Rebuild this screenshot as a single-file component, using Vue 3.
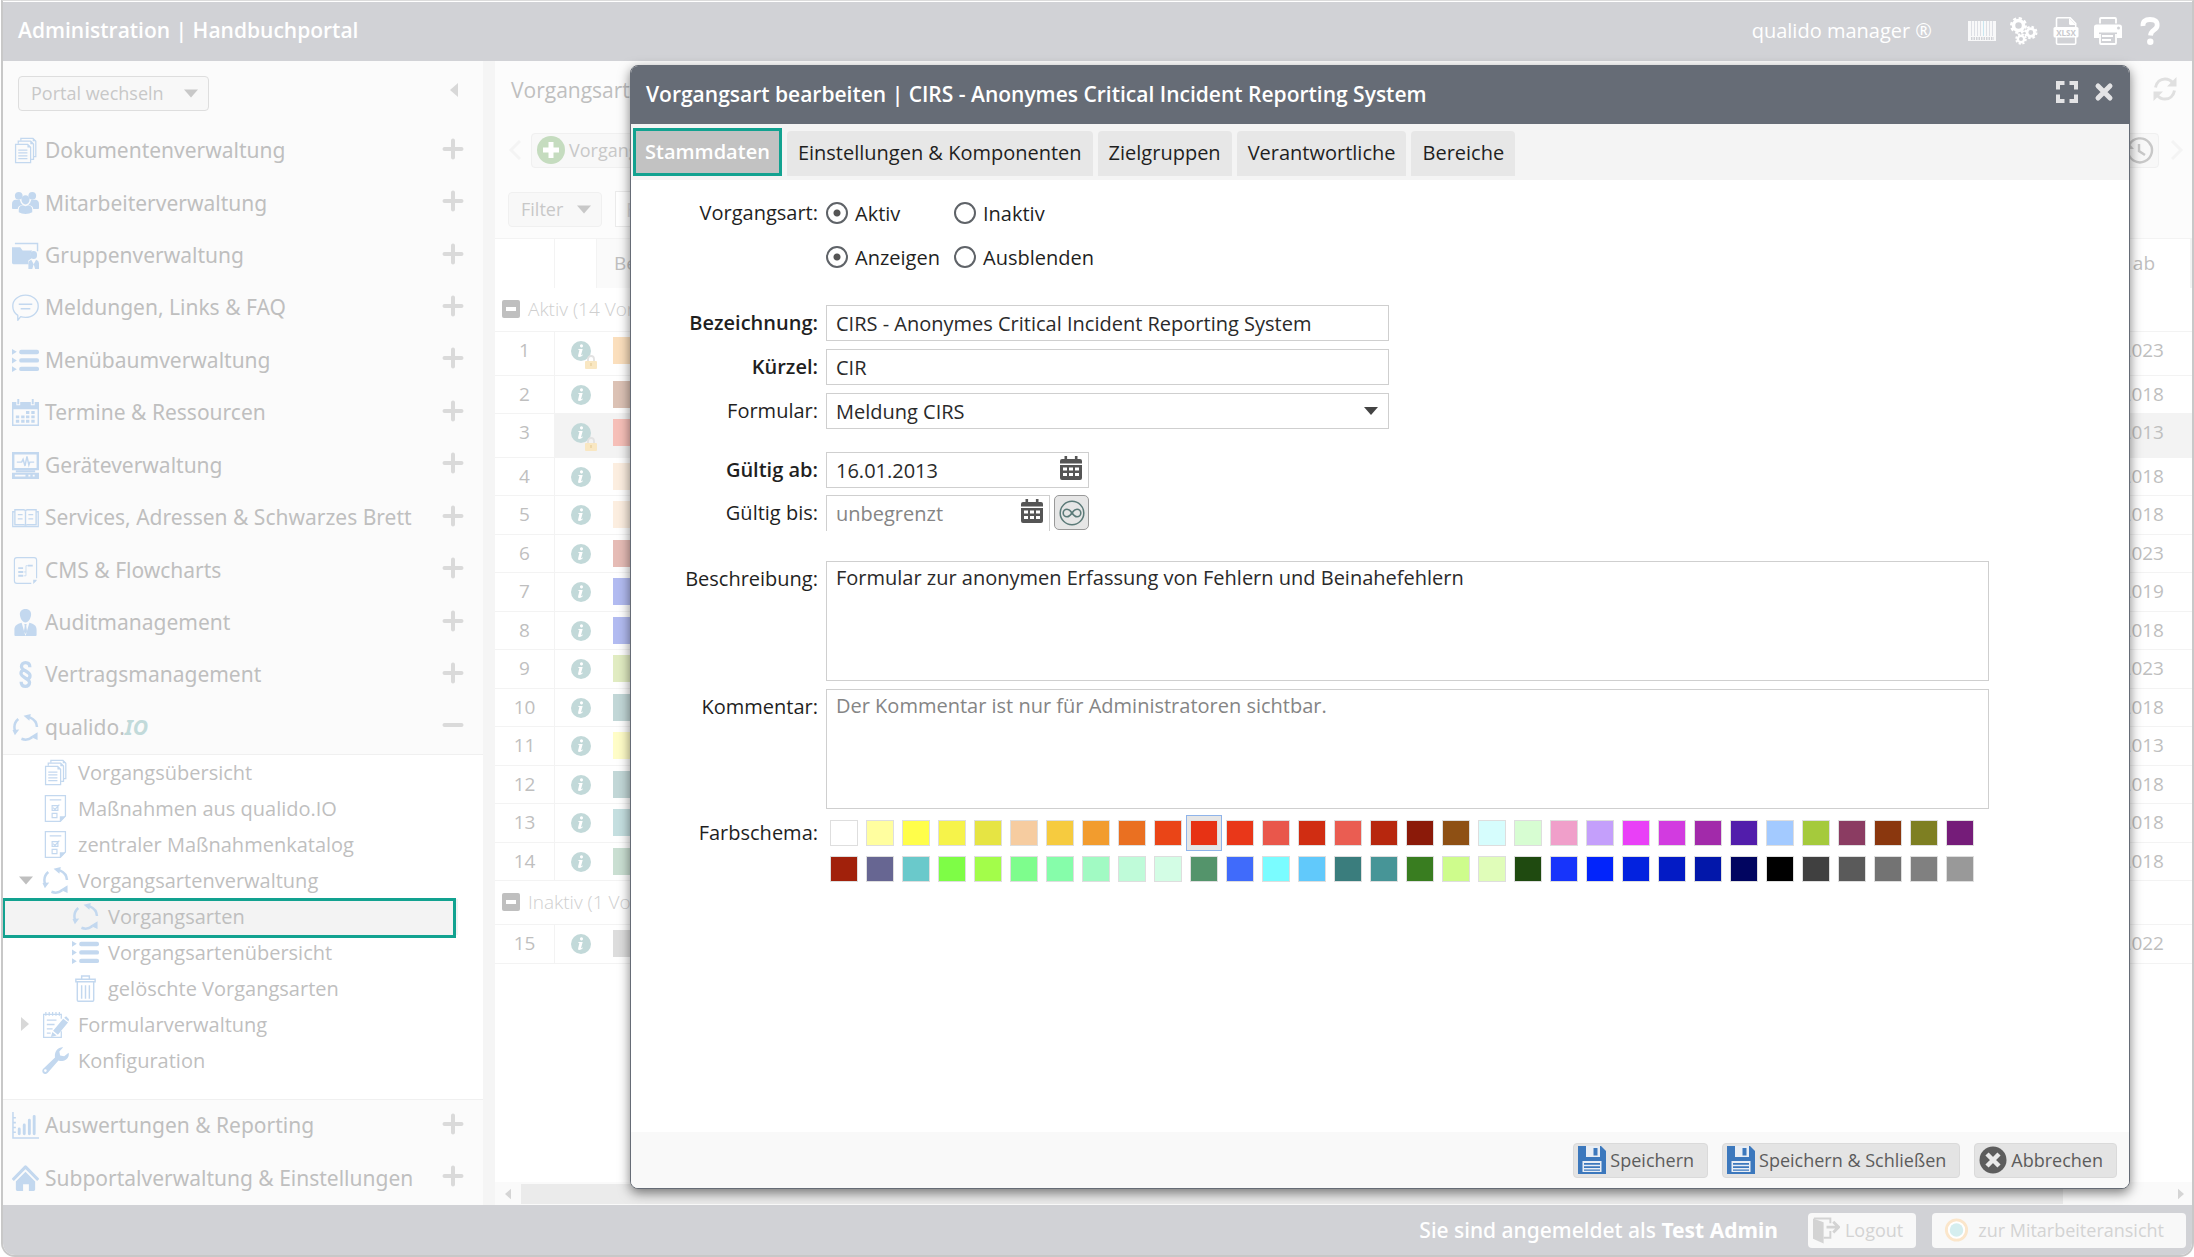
<script setup>
import { ref } from 'vue'

const menuTop = [
  { icon: 'docs', label: 'Dokumentenverwaltung' },
  { icon: 'people', label: 'Mitarbeiterverwaltung' },
  { icon: 'group', label: 'Gruppenverwaltung' },
  { icon: 'speech', label: 'Meldungen, Links & FAQ' },
  { icon: 'list', label: 'Menübaumverwaltung' },
  { icon: 'calendar', label: 'Termine & Ressourcen' },
  { icon: 'device', label: 'Geräteverwaltung' },
  { icon: 'book', label: 'Services, Adressen & Schwarzes Brett' },
  { icon: 'flow', label: 'CMS & Flowcharts' },
  { icon: 'person', label: 'Auditmanagement' },
  { icon: 'law', label: 'Vertragsmanagement' }
]
const menuBottom = [
  { icon: 'chart', label: 'Auswertungen & Reporting' },
  { icon: 'house', label: 'Subportalverwaltung & Einstellungen' }
]
const tree = [
  { icon: 'docs', label: 'Vorgangsübersicht', level: 1 },
  { icon: 'sheet', label: 'Maßnahmen aus qualido.IO', level: 1 },
  { icon: 'sheet', label: 'zentraler Maßnahmenkatalog', level: 1 },
  { icon: 'cycle', label: 'Vorgangsartenverwaltung', level: 1, caret: 'open' },
  { icon: 'cycle', label: 'Vorgangsarten', level: 2, current: true },
  { icon: 'list', label: 'Vorgangsartenübersicht', level: 2 },
  { icon: 'trash', label: 'gelöschte Vorgangsarten', level: 2 },
  { icon: 'note', label: 'Formularverwaltung', level: 1, caret: 'closed' },
  { icon: 'wrench', label: 'Konfiguration', level: 1 }
]
const groups = [
  {
    title: 'Aktiv (14 Vorgangsarten)',
    rows: [
      { nr: 1, color: '#fbdfbd', date: '01.01.2023', locked: true },
      { nr: 2, color: '#dcc2b5', date: '01.01.2018' },
      { nr: 3, color: '#f6bfb8', date: '16.01.2013', locked: true, active: true },
      { nr: 4, color: '#fceee0', date: '01.01.2018' },
      { nr: 5, color: '#fceee0', date: '01.01.2018' },
      { nr: 6, color: '#e6bcb6', date: '01.01.2023' },
      { nr: 7, color: '#b2bbf1', date: '01.01.2019' },
      { nr: 8, color: '#b2bbf1', date: '01.01.2018' },
      { nr: 9, color: '#e1ecc2', date: '01.01.2023' },
      { nr: 10, color: '#c2d7d7', date: '01.01.2018' },
      { nr: 11, color: '#fffdc8', date: '01.01.2013' },
      { nr: 12, color: '#c2d7d7', date: '01.01.2018' },
      { nr: 13, color: '#c5dfe0', date: '01.01.2018' },
      { nr: 14, color: '#cadfd2', date: '01.01.2018' }
    ]
  },
  {
    title: 'Inaktiv (1 Vorgangsart)',
    rows: [{ nr: 15, color: '#dddddd', date: '01.01.2022' }]
  }
]
const tabs = ['Stammdaten', 'Einstellungen & Komponenten', 'Zielgruppen', 'Verantwortliche', 'Bereiche']
const colors = [
  '#ffffff', '#fffe9f', '#fffe4a', '#f6f34a', '#e6e443', '#f6cca0', '#f6cb3f', '#f29c2e',
  '#ea7021', '#ea4517', '#e73214', '#e93719', '#e9574b', '#d02d12', '#ea5d52', '#b7270e',
  '#8b1a09', '#8e5014', '#d6fdfd', '#d7fdd2', '#f09fca', '#c49ffb', '#e940f7', '#d23be0',
  '#a22aaa', '#521dab', '#a3caff', '#a5ca3c', '#8b3c62', '#8a370e', '#7e7f22', '#751c79',
  '#a1210b', '#676692', '#6ac9cb', '#7efd46', '#a3fd4a', '#7efd8d', '#86fdaa', '#a1fac3',
  '#bffbd9', '#d3fde5', '#54946b', '#406bfb', '#7afcff', '#61c9fb', '#3a7d7d', '#479597',
  '#397d20', '#cefc8c', '#e0fdb9', '#1f4a10', '#1734fb', '#0224fb', '#0322df', '#031bc5',
  '#0217aa', '#010560', '#000000', '#404040', '#5a5a5a', '#737373', '#808080', '#999999'
]

const tab = ref(0)
const status = ref('aktiv')
const visibility = ref('anzeigen')
const name = ref('CIRS - Anonymes Critical Incident Reporting System')
const short = ref('CIR')
const validFrom = ref('16.01.2013')
const validTo = ref('')
const description = ref('Formular zur anonymen Erfassung von Fehlern und Beinahefehlern')
const comment = ref('')
const color = ref('#e73214')
</script>

<template>
  <svg class="defs" aria-hidden="true">
    <symbol id="docs" viewBox="0 0 28 28">
      <g fill="none" stroke="currentColor" stroke-width="1.3">
        <path d="M3.700 7.700h12.600l3 3v16H3.700z" /><path d="M6.500 7V4.200h12.800l3 3v16h-2.500" /><path d="M9.200 3.800V1.300h12.500l3 3v16h-2.200" />
        <path d="M6.500 13.500h9.500M6.500 16.500h9.500M6.500 19.500h9.500M6.500 22.500h9.500" />
      </g>
      <path fill="currentColor" d="M16 7.500l3.500 3.500H16zM19 4l3.500 3.500H19zM21.500 1l3.500 3.500h-3.500z" />
    </symbol>
    <symbol id="people" viewBox="0 0 28 28">
      <g fill="currentColor">
        <circle cx="7" cy="6" r="4" /><circle cx="21" cy="6" r="4" />
        <path d="M0 19v-4.500q0-4 4-4.300h4q1 4 3 5-5 1-5 4.500H1Q0 19.700 0 19zM28 19v-4.500q0-4-4-4.300h-4q-1 4-3 5 5 1 5 4.500h5q1 0 1-.7z" />
        <ellipse cx="14" cy="10.200" rx="4.200" ry="4.800" />
        <path d="M7 23v-2.500q0-4 4-4.700l3 1 3-1q4 .7 4 4.700V23q-3 1.800-7 1.800T7 23z" />
      </g>
    </symbol>
    <symbol id="group" viewBox="0 0 28 28">
      <path d="M3 1.500h23.500v8" fill="none" stroke="currentColor" stroke-width="1.500" />
      <path fill="currentColor" d="M0 5.500h8.500l2.500 3.300h10q-2 2-1.500 5l1 3-3.500 2.500V23H1.500Q0 23 0 21.500z" />
      <ellipse cx="22.500" cy="13.500" rx="3.500" ry="4.200" fill="currentColor" />
      <path fill="currentColor" d="M17 28v-6q0-2.500 3-3.500l2.500 4.500 2.500-4.500q3 1 3 3.500v6h-4l-1.500-5-1.500 5z" />
    </symbol>
    <symbol id="speech" viewBox="0 0 28 28">
      <path fill="none" stroke="currentColor" stroke-width="1.400" stroke-linejoin="round" d="M14 1.200c7.300 0 13.200 5 13.200 11.500S21.300 24.200 14 24.200c-1.800 0-3.400-.2-5-.8L6 27.200v-5C2.800 20 .8 16.600.8 12.700.8 6.200 6.700 1.200 14 1.200z" />
      <path stroke="currentColor" stroke-width="1.500" d="M7 10.700h14M9 15.300h10" />
    </symbol>
    <symbol id="list" viewBox="0 0 28 28">
      <g fill="currentColor">
        <path d="M0 2l5 3-5 3zM0 11l5 3-5 3zM0 20l5 3-5 3z" />
        <rect x="7.500" y="2.800" width="20.500" height="4.600" rx="2" /><rect x="7.500" y="11.600" width="20.500" height="4.600" rx="2" /><rect x="7.500" y="20.400" width="20.500" height="4.600" rx="2" />
      </g>
    </symbol>
    <symbol id="calendar" viewBox="0 0 28 28">
      <path fill="currentColor" fill-rule="evenodd" d="M0 3h4.500v3.500h4V3h11v3.500h4V3H28v25H0zM1.500 10.500v16h25v-16z" />
      <path fill="currentColor" d="M5.500 0h2v5.500h-2zM20.500 0h2v5.500h-2zM14.500 12.500h3.500v3h-3.500zM20 12.500h3.500v3H20zM4 17h3.500v3H4zM9.500 17H13v3H9.500zM14.500 17h3.500v3h-3.500zM20 17h3.500v3H20zM4 21.500h3.500v3H4zM9.500 21.500H13v3H9.500zM14.500 21.500h3.500v3h-3.500zM20 21.500h3.500v3H20z" />
    </symbol>
    <symbol id="device" viewBox="0 0 28 28">
      <path fill="currentColor" fill-rule="evenodd" d="M0 0h28v19H0zM2.500 2.500v14h23v-14z" />
      <path fill="none" stroke="currentColor" stroke-width="1.500" d="M5 10.500h5l1.500-3 2 7 2-10 2 9 1-3H23" />
      <path fill="currentColor" fill-rule="evenodd" d="M4 19h20v2H4zM0 21.500h28V28H0zM3 23.500v2h11v-2zM17 23.500v2h2v-2zM21.500 23.500v2h2v-2z" />
    </symbol>
    <symbol id="book" viewBox="0 0 28 28">
      <g fill="none" stroke="currentColor" stroke-width="1.400">
        <path d="M3 6h9q2 0 2 2 0-2 2-2h9v15.500h-9q-2 0-2 1 0-1-2-1H3z" /><path d="M3 8H.8v15.500h26.400V8H25M14 8v14M6 11h5M6 15.500h5M17 11h5M17 15.500h5" />
      </g>
    </symbol>
    <symbol id="flow" viewBox="0 0 28 28">
      <path fill="none" stroke="currentColor" stroke-width="1.200" d="M20 27.400H5q-2.500 0-2.500-2.500V3Q2.500.6 5 .6h18q2.500 0 2.500 2.400v19" />
      <path fill="currentColor" d="M25.500 23.500v1l-3.500 3.500v-4.500zM6.500 10.500h5v2h-5zM6.500 14.500h5v2h-5zM6.500 18.500h5v2h-5zM16.500 8h5v1.800h-5z" />
      <path fill="none" stroke="currentColor" stroke-width=".8" d="M12 19.500h2.500V9h2M12 15.500h2.500" />
    </symbol>
    <symbol id="person" viewBox="0 0 28 28">
      <path fill="currentColor" d="M14 0c4 0 6 2.500 5.800 6-.3 4-2.800 8-5.800 8S8.500 10 8.200 6C8 2.500 10 0 14 0zM2.500 27v-5.500c0-4 2.500-6 7.500-7.200l3.200 11L14 28H3.500q-1 0-1-1zM25.500 27v-5.500c0-4-2.500-6-7.500-7.200l-3.200 11L14 28h10.500q1 0 1-1zM12.800 15.500h2.400l-.4 2 .8 5.500-1.600 3-1.600-3 .8-5.500z" />
    </symbol>
    <symbol id="law" viewBox="0 0 28 28">
      <path fill="none" stroke="currentColor" stroke-width="3.400" d="M18.500 6.500C18.500 3 16.500 1.700 14 1.700S9.800 3.500 9.800 5.600c0 4.600 8.900 5 8.900 9.600 0 2-1.500 3.300-3.500 3.600M9.500 21.500c0 3.500 2 4.800 4.500 4.800s4.200-1.800 4.200-3.900c0-4.600-8.900-5-8.900-9.600 0-2 1.500-3.300 3.500-3.600" />
    </symbol>
    <symbol id="cycle" viewBox="0 0 28 28">
      <g fill="none" stroke="currentColor" stroke-width="2.600">
        <path d="M18.500 3.500c4 1.700 7.200 5.500 7.400 10" /><path d="M21 24.200c-3 2.200-7.500 3-11.200 1.500" /><path d="M3 17C1.800 12.500 3 8.200 6.500 5.200" />
      </g>
      <path fill="currentColor" d="M12 1.800l7.500-1.800-1.500 7zM26.500 19v8l-7.500-3.500zM.5 16.500l7-.5-4.500 6z" />
    </symbol>
    <symbol id="sheet" viewBox="0 0 28 28">
      <path fill="none" stroke="currentColor" stroke-width="1.300" d="M3.500.7h20.800v21l-5.300 5.600H3.500z" />
      <path fill="currentColor" d="M18.500 22h6l-6 6z" />
      <path fill="none" stroke="currentColor" stroke-width="1.200" d="M8 5h12M10.500 11h6v5h-6zM11.500 13l2 2 4.500-5M10.500 19h5v4.500h-5z" />
    </symbol>
    <symbol id="trash" viewBox="0 0 28 28">
      <path fill="none" stroke="currentColor" stroke-width="1.500" d="M10 3.500V1h8v2.500M4 4.500h20v2.500H4zM5.500 7v19q0 1.300 1.300 1.300h14.400q1.300 0 1.300-1.300V7M10 10.500v14M14 10.500v14M18 10.500v14" />
    </symbol>
    <symbol id="note" viewBox="0 0 28 28">
      <path fill="none" stroke="currentColor" stroke-width="1.300" d="M20 21v6.300H1.700V3.500H20V8M4 1v4M7.500 1v4M11 1v4M14.500 1v4M18 1v4M5 9.500h10M5 14h8M5 18.500h6M5 23h4" />
      <path fill="currentColor" d="M22 8l5 4-10.500 12.500-5-4zM23 7l2-1.500L28 8.500 27.500 11zM10.800 21.800l4.400 3.500-6 1.700z" />
    </symbol>
    <symbol id="wrench" viewBox="0 0 28 28">
      <path fill="currentColor" fill-rule="evenodd" d="M22 .2l-4 4.500.8 4 4.200 1L27.600 6c1 4-1.800 8.200-6.600 8.600-1.500.1-2.800-.1-3.900-.6L6 26.800c-1.500 1.700-3.500 1.500-4.700.3s-1.500-3 0-4.500L13.500 11C12.500 5 16.500-.4 22 .2zM3.500 23a1.400 1.400 0 100 2.800 1.400 1.400 0 000-2.800z" />
    </symbol>
    <symbol id="chart" viewBox="0 0 28 28">
      <path fill="none" stroke="currentColor" stroke-width="1.600" d="M1 0v27h27M1 6h3M1 11h3M1 16h3M1 21h3" />
      <path stroke="currentColor" stroke-width="3" stroke-linecap="round" d="M7.500 17.500v5M12.700 13.500v9M18 8.500v14M23 4.500v18" />
    </symbol>
    <symbol id="house" viewBox="0 0 28 28">
      <path fill="none" stroke="currentColor" stroke-width="3.200" stroke-linejoin="round" d="M.8 15.500L14 2l13.200 13.500" />
      <path fill="currentColor" d="M14 7l10 10v8.500q0 1.500-1.500 1.500H17.500v-7h-6v7h-6Q4 27 4 25.500V17z" />
    </symbol>
    <symbol id="info" viewBox="0 0 20 20">
      <circle cx="10" cy="10" r="10" fill="currentColor" />
      <path fill="#fff" d="M9.700 3.600a1.500 1.500 0 102.300 1.300 1.500 1.500 0 00-2.300-1.300zM7.500 8h4.200l-1.700 6.300q.7 0 1.700-.8l.3.500q-1.800 2-3.700 2-1.600 0-1.200-1.600l1.300-5.300H7.300z" />
    </symbol>
    <symbol id="lock" viewBox="0 0 12 14">
      <path d="M3 7V4a3 3 0 016 0v3" fill="none" stroke="#e2e2e2" stroke-width="1.800" />
      <rect y="6" width="12" height="8" rx="1" fill="#f9e7c2" /><rect x="5" y="8" width="2" height="3" fill="#edd7a8" />
    </symbol>
    <symbol id="plus" viewBox="0 0 22 22">
      <path stroke="currentColor" stroke-width="4" stroke-linecap="round" d="M11 2.500v17M2.500 11h17" />
    </symbol>
    <symbol id="minus" viewBox="0 0 22 22">
      <path stroke="currentColor" stroke-width="4" stroke-linecap="round" d="M2.500 11h17" />
    </symbol>
    <symbol id="down" viewBox="0 0 14 8"><path fill="currentColor" d="M0 0h14L7 8z" /></symbol>
    <symbol id="left" viewBox="0 0 8 14"><path fill="currentColor" d="M8 0v14L0 7z" /></symbol>
    <symbol id="right" viewBox="0 0 8 14"><path fill="currentColor" d="M0 0v14l8-7z" /></symbol>
    <symbol id="date" viewBox="0 0 22 24">
      <path fill="currentColor" fill-rule="evenodd" d="M0 5q0-2 2-2h2.500V0h2.600v3h7.800V0h2.600v3H20q2 0 2 2v2.500H0zM0 9h22v13q0 2-2 2H2q-2 0-2-2zM3 11.500v3h4v-3zM9 11.500v3h4v-3zM15 11.500v3h4v-3zM3 17v3h4v-3zM9 17v3h4v-3zM15 17v3h4v-3z" />
    </symbol>
    <symbol id="save" viewBox="0 0 28 28">
      <path fill="#3c78bd" d="M0 0h23l5 5v23H0z" />
      <path fill="#e9eef5" d="M8 0h14v11H8zM4.500 15h19v11h-19z" />
      <path fill="#3c78bd" d="M15.500 2h4v7.500h-4zM6 17h16v1.700H6zM6 20.300h16V22H6zM6 23.500h16v1.300H6z" />
    </symbol>
  </svg>

  <div class="page">
    <header class="topbar">
      <h1>Administration | Handbuchportal</h1>
      <span class="brand">qualido manager ®</span>
      <nav class="tools" aria-label="Werkzeuge">
        <button type="button" aria-label="Barcode">
          <svg viewBox="0 0 28 28"><path fill="#fff" fill-opacity=".85" d="M0 4h28v20H0z" /><path stroke="#dddfe5" stroke-width="1" d="M3.500 4v15M6.500 4v15M9.500 4v15M12.500 4v15M18.500 4v15M21.500 4v15M24.500 4v15" /><path stroke="#c9e6f0" d="M15.500 4v15" /><path stroke="#d1d2d6" stroke-width="3" stroke-dasharray="1.500 1" d="M3 21.500h23" /></svg>
        </button>
        <button type="button" aria-label="Einstellungen">
          <svg viewBox="0 0 28 28" fill="none" stroke="#fff">
            <circle cx="8.500" cy="8.500" r="5" stroke-width="3.500" /><circle cx="8.500" cy="8.500" r="7.300" stroke-width="2.400" stroke-dasharray="3.200 2.530" />
            <circle cx="20.800" cy="15.500" r="3.800" stroke-width="2.800" /><circle cx="20.800" cy="15.500" r="5.700" stroke-width="2" stroke-dasharray="2.500 1.980" />
            <circle cx="11" cy="22" r="3.200" stroke-width="2.400" /><circle cx="11" cy="22" r="4.900" stroke-width="1.800" stroke-dasharray="2.200 1.650" />
          </svg>
        </button>
        <button type="button" aria-label="Excel-Export">
          <svg viewBox="0 0 28 28"><path fill="none" stroke="#fff" stroke-width="1.600" d="M4.500 10V2q0-1.200 1.200-1.200h12.500l5.500 5.700V10M4.500 20v6q0 1.200 1.200 1.200h16.800q1.200 0 1.200-1.200v-6" /><path fill="#fff" d="M17 1l7 7h-5.500Q17 8 17 6.500z" /><rect x="1.500" y="10" width="25" height="10.500" rx="1.500" fill="#fff" /><text x="14" y="18.500" text-anchor="middle" class="xlsx">XLSX</text></svg>
        </button>
        <button type="button" aria-label="Drucken">
          <svg viewBox="0 0 28 28"><path fill="none" stroke="#fff" stroke-width="1.800" d="M6 6.500V2q0-1 1-1h14q1 0 1 1v4.500" /><path fill="#fff" d="M2.500 7.500h23Q28 7.500 28 10v11h-5v-5.500H5V21H0V10q0-2.500 2.500-2.500z" /><circle cx="24.500" cy="11" r="1.500" fill="#d1d2d6" /><path fill="none" stroke="#fff" stroke-width="1.800" d="M6 17v9q0 1 1 1h14q1 0 1-1v-9M8 19h11M8 23h9" /></svg>
        </button>
        <button type="button" aria-label="Hilfe">
          <svg viewBox="0 0 28 28"><path fill="none" stroke="#fff" stroke-width="4.800" d="M7 9Q6.500 2.500 14 2.500t7.200 5.800Q21.200 11 18 13t-3.500 5.500" /><circle cx="14.300" cy="24.800" r="3.200" fill="#fff" /></svg>
        </button>
      </nav>
    </header>

    <div class="body">
      <aside class="sidebar">
        <div class="side-head">
          <button type="button" class="soft-btn portal">Portal wechseln <svg class="caret"><use href="#down" /></svg></button>
          <button type="button" class="collapse" aria-label="Einklappen"><svg><use href="#left" /></svg></button>
        </div>
        <button v-for="m in menuTop" :key="m.label" type="button" class="menu-item">
          <svg class="icon"><use :href="'#' + m.icon" /></svg>
          <span>{{ m.label }}</span>
          <svg class="toggle"><use href="#plus" /></svg>
        </button>
        <button type="button" class="menu-item" aria-expanded="true">
          <svg class="icon"><use href="#cycle" /></svg>
          <span>qualido.<b class="io">IO</b></span>
          <svg class="toggle"><use href="#minus" /></svg>
        </button>
        <ul class="tree">
          <li v-for="t in tree" :key="t.label" :class="{ deep: t.level === 2, current: t.current }">
            <span class="slot">
              <svg v-if="t.caret === 'open'" class="caret"><use href="#down" /></svg>
              <svg v-if="t.caret === 'closed'" class="side-caret"><use href="#right" /></svg>
            </span>
            <svg class="icon"><use :href="'#' + t.icon" /></svg>
            <a href="#">{{ t.label }}</a>
          </li>
        </ul>
        <button v-for="m in menuBottom" :key="m.label" type="button" class="menu-item">
          <svg class="icon"><use :href="'#' + m.icon" /></svg>
          <span>{{ m.label }}</span>
          <svg class="toggle"><use href="#plus" /></svg>
        </button>
      </aside>

      <main class="main">
        <div class="main-head">
          <h2>Vorgangsarten</h2>
          <button type="button" aria-label="Aktualisieren">
            <svg class="refresh" viewBox="0 0 24 24"><path fill="none" stroke="currentColor" stroke-width="3" d="M2.500 10.500C3.500 5 7.500 1.900 12 1.900c3.500 0 6 1.500 7.800 4M21.500 13.500C20.500 19 16.500 22.100 12 22.100c-3.500 0-6-1.500-7.800-4" /><path fill="currentColor" d="M23.500 0v9.500H14zM.5 24v-9.500H10z" /></svg>
          </button>
        </div>
        <div class="toolbar">
          <svg class="chevron" viewBox="0 0 14 20"><path d="M12 1L3 10l9 9" /></svg>
          <button type="button" class="soft-btn create">
            <svg viewBox="0 0 28 28"><circle cx="14" cy="14" r="14" fill="#c5dcbf" /><path stroke="#fff" stroke-width="5" d="M14 6v16M6 14h16" /></svg>
            Vorgangsart
          </button>
          <button type="button" class="soft-btn history" aria-label="Historie">
            <svg viewBox="0 0 28 28"><path fill="none" stroke="currentColor" stroke-width="2.400" d="M3.500 8.500A12 12 0 112 15M13 8v7l6 4" /><path fill="currentColor" d="M1 5v8h7z" /></svg>
          </button>
          <svg class="chevron" viewBox="0 0 14 20"><path d="M2 1l9 9-9 9" /></svg>
        </div>
        <div class="filterbar">
          <button type="button" class="soft-btn filter">Filter <svg class="caret"><use href="#down" /></svg></button>
          <input type="text" placeholder="Filter" aria-label="Filter">
        </div>
        <table class="grid">
          <colgroup><col class="c-nr"><col class="c-info"><col><col class="c-date"></colgroup>
          <thead>
            <tr><th></th><th></th><th class="name">Bezeichnung</th><th class="date">Gültig ab</th></tr>
          </thead>
          <tbody v-for="g in groups" :key="g.title">
            <tr class="group-row">
              <th colspan="4">
                <svg viewBox="0 0 18 18"><rect width="18" height="18" rx="2" fill="#bfbfbf" /><path fill="#fff" d="M4 7h10v4H4z" /></svg>{{ g.title }}
              </th>
            </tr>
            <tr v-for="r in g.rows" :key="r.nr" :class="{ odd: r.nr % 2, locked: r.locked, active: r.active }">
              <td class="nr">{{ r.nr }}</td>
              <td class="info">
                <div><svg class="i"><use href="#info" /></svg><svg v-if="r.locked" class="lock"><use href="#lock" /></svg></div>
              </td>
              <td class="name"><span class="chip" :style="{ background: r.color }"></span></td>
              <td class="date">{{ r.date }}</td>
            </tr>
          </tbody>
        </table>
        <div class="hscroll">
          <svg><use href="#left" /></svg><span class="thumb"></span><svg><use href="#right" /></svg>
        </div>
      </main>
    </div>

    <footer class="statusbar">
      <span class="login">Sie sind angemeldet als <b>Test Admin</b></span>
      <button type="button" class="status-btn">
        <svg viewBox="0 0 28 28"><path fill="currentColor" d="M0 2l11 4v22L0 23z" /><path fill="none" stroke="currentColor" stroke-width="2" d="M1 2h17v5M18 15v7h-7" /><path fill="none" stroke="currentColor" stroke-width="3" d="M14 11h12M21 5.500l5.500 5.500-5.500 5.500" /></svg>
        Logout
      </button>
      <button type="button" class="status-btn view">
        <svg viewBox="0 0 28 28"><circle cx="14" cy="14" r="10.500" fill="#fff" stroke="#fbe6cb" stroke-width="3" /><circle cx="14" cy="14" r="7" fill="#d5eeef" /></svg>
        zur Mitarbeiteransicht
      </button>
    </footer>

    <section class="modal" role="dialog" aria-labelledby="dlg-title">
      <header class="modal-head">
        <h2 id="dlg-title">Vorgangsart bearbeiten | CIRS - Anonymes Critical Incident Reporting System</h2>
        <button type="button" aria-label="Maximieren">
          <svg viewBox="0 0 22 22"><path fill="none" stroke="#e3e3e5" stroke-width="4" d="M2 8.500V2h6.500M13.500 2H20v6.500M20 13.500V20h-6.500M8.500 20H2v-6.500" /></svg>
        </button>
        <button type="button" aria-label="Schließen">
          <svg viewBox="0 0 22 22"><path stroke="#e3e3e5" stroke-width="5" stroke-linecap="round" d="M5 5l12 12M17 5L5 17" /></svg>
        </button>
      </header>
      <nav class="tabs" role="tablist">
        <button v-for="(t, i) in tabs" :key="t" type="button" role="tab" :aria-selected="tab === i" :class="{ on: tab === i }" @click="tab = i">{{ t }}</button>
      </nav>
      <form class="form" @submit.prevent>
        <div class="rows">
          <div class="row">
            <span class="label">Vorgangsart:</span>
            <label class="opt"><input v-model="status" type="radio" name="status" value="aktiv">Aktiv</label>
            <label class="opt"><input v-model="status" type="radio" name="status" value="inaktiv">Inaktiv</label>
          </div>
          <div class="row">
            <span class="label"></span>
            <label class="opt"><input v-model="visibility" type="radio" name="visibility" value="anzeigen">Anzeigen</label>
            <label class="opt"><input v-model="visibility" type="radio" name="visibility" value="ausblenden">Ausblenden</label>
          </div>
        </div>
        <div class="rows base">
          <div class="row">
            <label class="label strong" for="f-name">Bezeichnung:</label>
            <input id="f-name" v-model="name" class="field wide" type="text">
          </div>
          <div class="row">
            <label class="label strong" for="f-short">Kürzel:</label>
            <input id="f-short" v-model="short" class="field wide" type="text">
          </div>
          <div class="row">
            <label class="label" for="f-form">Formular:</label>
            <div class="select wide">
              <select id="f-form" class="field"><option>Meldung CIRS</option></select>
              <svg><use href="#down" /></svg>
            </div>
          </div>
        </div>
        <div class="rows dates">
          <div class="row">
            <label class="label strong" for="f-from">Gültig ab:</label>
            <div class="date-box">
              <input id="f-from" v-model="validFrom" class="field" type="text">
              <button type="button" aria-label="Datum wählen"><svg><use href="#date" /></svg></button>
            </div>
          </div>
          <div class="row">
            <label class="label" for="f-to">Gültig bis:</label>
            <div class="date-box short">
              <input id="f-to" v-model="validTo" class="field" type="text" placeholder="unbegrenzt">
              <button type="button" aria-label="Datum wählen"><svg><use href="#date" /></svg></button>
            </div>
            <button type="button" class="infinite" aria-label="Unbegrenzt">
              <svg viewBox="0 0 26 26" fill="none" stroke="#5b7a78"><circle cx="13" cy="13" r="11.800" stroke-width="1.500" /><path stroke-width="1.600" d="M13 13c-2-3-3.300-3.800-5-3.800a3.800 3.800 0 000 7.600c1.700 0 3-.8 5-3.800s3.300-3.800 5-3.800a3.800 3.800 0 010 7.600c-1.700 0-3-.8-5-3.800z" /></svg>
            </button>
          </div>
        </div>
        <div class="rows texts">
          <div class="row">
            <label class="label" for="f-desc">Beschreibung:</label>
            <textarea id="f-desc" v-model="description" class="field"></textarea>
          </div>
          <div class="row">
            <label class="label" for="f-comment">Kommentar:</label>
            <textarea id="f-comment" v-model="comment" class="field" placeholder="Der Kommentar ist nur für Administratoren sichtbar."></textarea>
          </div>
        </div>
        <div class="row scheme">
          <span id="l-color" class="label">Farbschema:</span>
          <div class="palette" role="radiogroup" aria-labelledby="l-color">
            <label v-for="c in colors" :key="c" :class="{ picked: color === c }">
              <input v-model="color" type="radio" name="color" :value="c" :aria-label="c" :style="{ background: c }">
            </label>
          </div>
        </div>
      </form>
      <footer class="modal-foot">
        <button type="button" class="act"><svg><use href="#save" /></svg>Speichern</button>
        <button type="button" class="act"><svg><use href="#save" /></svg>Speichern &amp; Schließen</button>
        <button type="button" class="act">
          <svg viewBox="0 0 28 28"><circle cx="14" cy="14" r="13.500" fill="#5d5d5d" /><path stroke="#e9e9e9" stroke-width="4.500" d="M8 8l12 12M20 8L8 20" /></svg>Abbrechen
        </button>
      </footer>
    </section>
  </div>
</template>

<style>
html { background: #fff; }
</style>

<style scoped>
* { box-sizing: border-box; }
.defs { position: absolute; width: 0; height: 0; }
svg { display: block; flex: none; }
h1, h2 { margin: 0; font-size: 21px; font-weight: 600; }
button { font: inherit; color: inherit; border: 0; background: none; padding: 0; cursor: pointer; }
a { color: inherit; text-decoration: none; }

.page {
  position: relative;
  display: flex;
  flex-direction: column;
  min-height: 100vh;
  margin-left: 1px;
  padding-top: 1px;
  border: 2px solid #c8c8c8;
  border-top: 1px solid #dcdcdc;
  border-radius: 0 0 14px 14px;
  overflow: hidden;
  font: 20px/27px "Open Sans", "Noto Sans", sans-serif;
  color: #bfbfbf;
}

.topbar {
  display: flex;
  align-items: center;
  height: 59px;
  padding: 0 28px 2px 15px;
  background: #d1d2d6;
  color: #fff;
}
.topbar h1 { flex: 1; }
.brand { font-weight: 500; margin-right: 36px; }
.tools { display: flex; gap: 14px; }
.tools svg { width: 28px; height: 28px; }
.xlsx { font-size: 8px; font-weight: 700; fill: #c9cace; }

.body { flex: 1; display: flex; }
.sidebar {
  display: flex;
  flex-direction: column;
  flex: none;
  width: 492px;
  background: #fbfbfb;
  border-right: 12px solid #f5f5f5;
}
.side-head { display: flex; justify-content: space-between; align-items: flex-start; height: 64px; padding: 15px 25px 0 15px; }
.soft-btn {
  display: flex;
  align-items: center;
  height: 35px;
  border: 1px solid #f0f0f0;
  border-radius: 4px;
  background: #f8f8f8;
  color: #c8c8c8;
  font-size: 18px;
}
.portal { justify-content: space-between; width: 191px; padding: 0 10px 0 12px; border-color: #dedede; }
.caret { width: 14px; height: 9px; }
.collapse { color: #d8d8d8; margin-top: 7px; }
.collapse svg { width: 8px; height: 14px; }
.menu-item { flex: 1; display: flex; align-items: center; gap: 6px; min-height: 40px; padding: 0 19px 1px 9px; font-family: "Noto Sans", "Open Sans", sans-serif; font-size: 21px; text-align: left; }
.menu-item span { flex: 1; }
.icon { width: 27px; height: 27px; color: #c3d8ef; }
.toggle { width: 22px; height: 22px; margin-bottom: 4px; color: #dadada; }
.io { font-style: italic; color: #c2dada; }
.tree {
  list-style: none;
  margin: 0;
  padding: 0 0 20px;
  background: #fff;
  border-top: 1px solid #f0f0f0;
  border-bottom: 1px solid #f0f0f0;
}
.tree li { display: flex; align-items: center; height: 36px; padding: 0 0 2px 12px; }
.tree li.deep { padding-left: 42px; }
.tree a { margin-left: 9px; }
.slot { width: 27px; padding-left: 4px; }
.side-caret { width: 8px; height: 14px; margin-left: 2px; color: #d8d8d8; }
.tree .current { position: relative; margin-right: 25px; background: #f3f3f3; }
.current::after { content: ""; position: absolute; inset: -1px 2px -3px -1px; border: 3px solid #12a290; }

.main { flex: 1; min-width: 0; display: flex; flex-direction: column; }
.main-head, .toolbar, .filterbar { display: flex; align-items: center; background: #fcfcfc; }
.main-head { justify-content: space-between; height: 59px; padding: 0 15px 0 16px; }
.main-head h2 { font-weight: 400; }
.refresh { width: 24px; height: 24px; color: #e0e0e0; margin-bottom: 4px; }
.toolbar { height: 60px; padding: 0 8px 0 13px; }
.chevron { width: 14px; height: 20px; fill: none; stroke: #f4f4f4; stroke-width: 3; }
.create { gap: 4px; margin-left: 9px; padding: 0 12px 0 5px; }
.create svg { width: 28px; height: 28px; }
.history { width: 38px; justify-content: center; margin: 0 11px 0 auto; }
.history svg { width: 28px; height: 28px; }
.filterbar { height: 58px; gap: 13px; padding: 0 13px; }
.filter { width: 94px; justify-content: space-between; padding: 0 10px 0 12px; }
.filterbar input { width: 260px; height: 36px; padding: 0 10px; border: 1px solid #ebebeb; font: inherit; }
.filterbar input::placeholder { color: #dcdcdc; }

.grid { width: 100%; table-layout: fixed; border-collapse: separate; border-spacing: 0; border-top: 1px solid #f3f3f3; font-size: 19px; }
.c-nr { width: 60px; }
.c-info { width: 42px; }
.c-date { width: 132px; }
.grid th, .grid td { padding: 0; border-bottom: 1px solid #f3f3f3; font-weight: 400; text-align: left; }
.grid thead th { height: 49px; border-right: 1px solid #f3f3f3; border-bottom: 0; }
.grid thead .name { padding-left: 17px; background: #fafafa; }
.grid thead .date { padding-right: 35px; text-align: right; border-right: 2px solid #f3f3f3; }
.grid td { height: 38px; }
.odd td { height: 39px; }
.grid .locked td { height: 44px; }
.group-row th { height: 44px; padding-left: 7px; color: #cfcfcf; font-weight: 300; white-space: nowrap; }
.group-row svg { display: inline-block; width: 18px; height: 18px; margin-right: 8px; vertical-align: -2px; }
.grid .nr { text-align: center; border-right: 1px solid #f3f3f3; vertical-align: top; line-height: 37px; }
.info { vertical-align: top; }
.info div { position: relative; padding: 9px 0 0 16px; }
.info .i { width: 20px; height: 20px; color: #c2d9d9; }
.info .lock { position: absolute; left: 30px; top: 23px; width: 12px; height: 14px; }
.grid td.name { padding: 5px 0 0 16px; vertical-align: top; }
.chip { display: block; width: 27px; height: 27px; }
.grid td.date { padding-right: 28px; text-align: right; vertical-align: top; line-height: 37px; }
.active td:not(.nr) { background: #f3f3f3; }
.hscroll { display: flex; align-items: center; height: 23px; margin-top: auto; padding: 0 8px 0 10px; background: #fafafa; color: #d5d5d5; }
.hscroll svg { width: 6px; height: 12px; }
.thumb { flex: 1; height: 20px; margin: 0 115px 0 10px; background: #ebebeb; }

.statusbar {
  display: flex;
  align-items: center;
  justify-content: flex-end;
  gap: 16px;
  height: 50px;
  padding: 0 6px 0 0;
  background: #d1d2d6;
  color: #fff;
}
.login { font-family: "Noto Sans", "Open Sans", sans-serif; font-size: 21px; font-weight: 500; margin-right: 14px; }
.status-btn { display: flex; align-items: center; gap: 5px; height: 35px; padding: 0 13px 0 5px; border-radius: 4px; background: #f8f8f8; color: #d3d3d3; font-size: 18px; }
.status-btn svg { width: 27px; height: 28px; }
.view { padding: 0 22px 0 11px; gap: 8px; }

.modal {
  position: absolute;
  inset: 64px 62px 66px 627px;
  display: flex;
  flex-direction: column;
  border: 1px solid #666c76;
  border-radius: 8px;
  overflow: hidden;
  background: #fff;
  color: #1f1f1f;
  box-shadow: 0 4px 12px rgba(0, 0, 0, .5);
}
.modal-head { display: flex; align-items: center; gap: 15px; height: 58px; padding: 0 14px 2px 15px; background: #666c76; color: #fff; }
.modal-head h2 { flex: 1; }
.modal-head svg { width: 22px; height: 22px; margin-bottom: 4px; }
.tabs { display: flex; align-items: center; gap: 5px; height: 56px; padding: 3px 2px 0; background: #f4f4f4; }
.tabs button { height: 45px; padding: 0 11px 2px; border-radius: 4px 4px 0 0; background: #e7e7e7; }
.tabs .on { height: 48px; margin-bottom: 3px; padding: 0 9px 1px; border: 3px solid #12a290; border-radius: 0; background: #c2c2c2; color: #fff; font-weight: 600; }

.form { flex: 1; padding: 15px 140px 0 0; }
.rows { display: flex; flex-direction: column; gap: 8px; }
.base, .texts { margin-top: 30px; }
.dates { margin-top: 23px; gap: 7px; }
.scheme { margin-top: 6px; }
.row { display: flex; }
.label { width: 187px; margin-right: 8px; line-height: 36px; text-align: right; }
.strong { font-weight: 600; }
.opt { display: flex; align-items: center; gap: 7px; width: 128px; height: 36px; white-space: nowrap; }
.opt input { appearance: none; flex: none; width: 22px; height: 22px; margin: 0; border: 2px solid #5f6368; border-radius: 50%; background: #fff; }
.opt input:checked { background: radial-gradient(circle, #555 0 3px, #fff 4px); }
.field { width: 100%; height: 36px; margin: 0; padding: 0 9px; border: 1px solid #cfcfcf; border-radius: 0; background: #fff; font: inherit; color: #2a2a2a; outline: 0; }
.field::placeholder { color: #858585; opacity: 1; }
.wide { width: 563px; }
.select { position: relative; }
.select select { appearance: none; }
.select svg { position: absolute; right: 11px; top: 14px; width: 14px; height: 8px; color: #444; pointer-events: none; }
.date-box { position: relative; width: 263px; }
.date-box button { position: absolute; right: 7px; top: 4px; color: #555; }
.date-box svg { width: 22px; height: 24px; }
.date-box.short { width: 224px; margin-right: 4px; }
.short .field { border-bottom: 0; }
.infinite { display: flex; align-items: center; justify-content: center; width: 35px; height: 35px; border: 1px solid #999; border-radius: 5px; background: #e6e6e6; }
.infinite svg { width: 26px; height: 26px; }
textarea.field { flex: 1; height: 120px; padding-top: 2px; resize: none; }
.palette { flex: 1; display: flex; flex-wrap: wrap; }
.palette label { display: flex; align-items: center; justify-content: center; width: 36px; height: 36px; border: 1px solid transparent; }
.palette .picked { border-color: #8fb4ea; background: #e6e6e6; }
.palette input { appearance: none; width: 28px; height: 26px; margin: 0; border: 1px solid #dedede; }

.modal-foot { display: flex; align-items: center; justify-content: flex-end; gap: 14px; height: 56px; padding: 0 12px 0 0; background: #f9f9f9; }
.act { display: flex; align-items: center; gap: 4px; height: 35px; padding: 0 13px 0 4px; border: 1px solid #dadada; border-radius: 4px; background: #e4e4e4; color: #5c5c5c; font-size: 18px; }
.act svg { width: 28px; height: 28px; }
</style>
